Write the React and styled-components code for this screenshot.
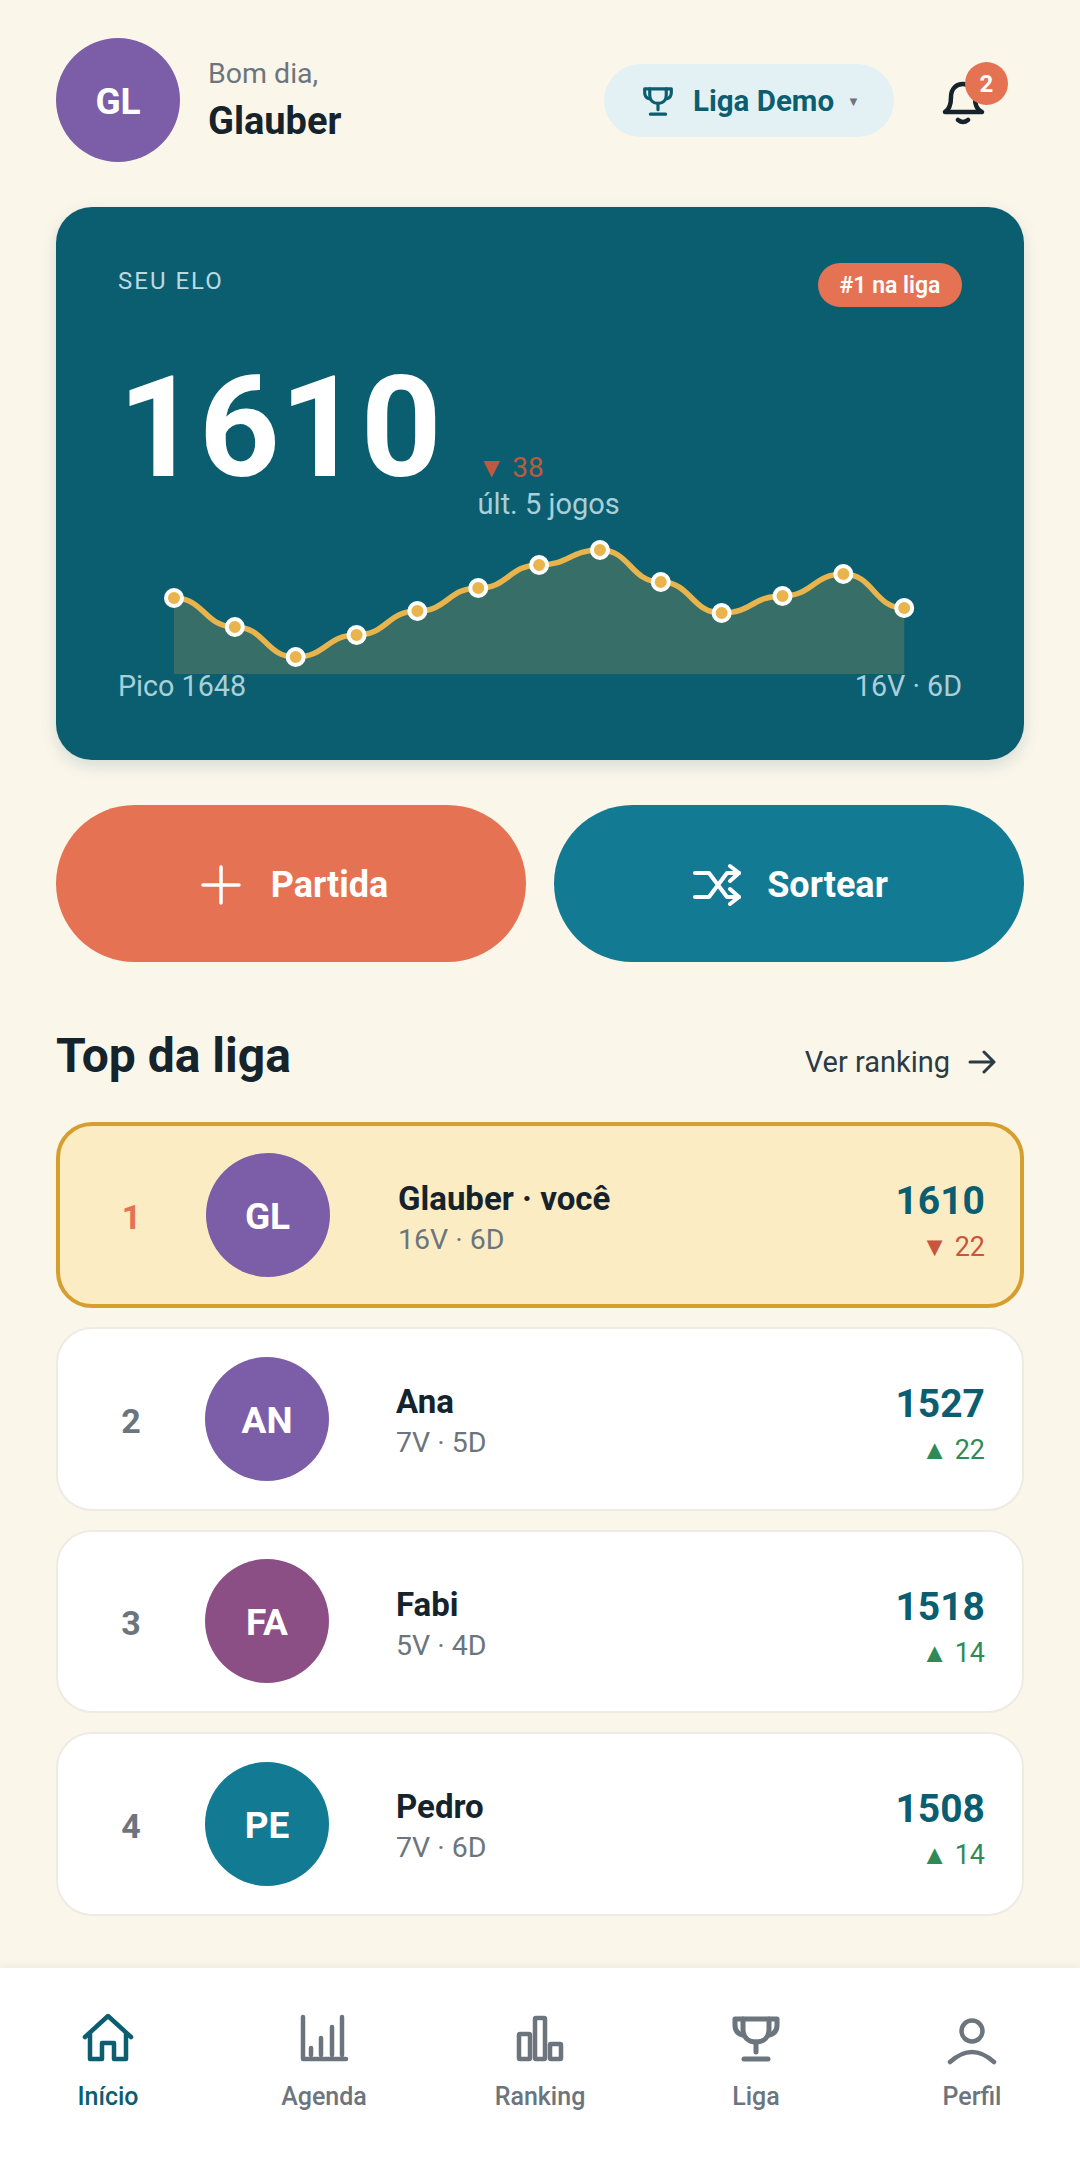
import React from "react";
import styled, { createGlobalStyle } from "styled-components";

const TEAL_DARK = "#0b5e70";
const TEAL = "#127b93";
const CORAL = "#e57353";
const INK = "#15232c";
const GRAY = "#6c757d";
const GOLD = "#e9b44c";
const PALE = "#a9cfd9";

const GlobalStyle = createGlobalStyle`
  html, body {
    margin: 0;
    padding: 0;
    background: #fbf6ea;
    font-family: Roboto, "Liberation Sans", sans-serif;
    color: ${INK};
  }
  * { box-sizing: border-box; }
`;

const Page = styled.div`
  width: 1080px;
  min-height: 2160px;
  display: flex;
  flex-direction: column;
`;

const Content = styled.main`
  flex: 1;
  padding: 38px 56px 0;
`;

const Header = styled.header`
  display: flex;
  align-items: center;
  height: 124px;
`;

const Avatar = styled.div`
  width: 124px;
  height: 124px;
  border-radius: 50%;
  flex: none;
  display: flex;
  align-items: center;
  justify-content: center;
  background: ${(p) => p.$color};
  color: #fff;
  font-size: 37px;
  font-weight: 700;
  padding-top: 3px;
`;

const Greeting = styled.div`
  margin-left: 28px;
  flex: 1;
  display: flex;
  flex-direction: column;
  gap: 9px;
  padding-top: 1px;
`;

const Hello = styled.span`
  font-size: 28.5px;
  line-height: 33px;
  color: ${GRAY};
`;

const UserName = styled.span`
  font-size: 38px;
  line-height: 45px;
  font-weight: 700;
`;

const LeaguePill = styled.button`
  width: 290px;
  height: 73px;
  border: 0;
  border-radius: 37px;
  background: #e4f1f4;
  color: ${TEAL_DARK};
  font-family: inherit;
  font-size: 29.5px;
  font-weight: 700;
  display: flex;
  align-items: center;
  padding: 2px 0 0 36px;
`;

const PillText = styled.span`
  margin-left: 17px;
`;

const Caret = styled.span`
  margin-left: 13px;
  font-size: 13px;
  color: ${GRAY};
`;

const BellButton = styled.div`
  position: relative;
  width: 44px;
  height: 44px;
  margin-left: 48px;
  margin-right: 38px;
  margin-top: 6px;
`;

const BellBadge = styled.span`
  position: absolute;
  top: -19px;
  left: 23px;
  width: 43px;
  height: 43px;
  border-radius: 50%;
  background: ${CORAL};
  color: #fff;
  font-size: 24px;
  font-weight: 700;
  display: flex;
  align-items: center;
  justify-content: center;
`;

const Hero = styled.section`
  margin-top: 45px;
  height: 553px;
  border-radius: 36px;
  background: ${TEAL_DARK};
  box-shadow: 0 6px 16px rgba(11, 94, 112, 0.16);
  padding: 56px 62px;
  color: #fff;
`;

const HeroTop = styled.div`
  display: flex;
  justify-content: space-between;
  align-items: flex-start;
`;

const EloLabel = styled.span`
  font-size: 24px;
  line-height: 36px;
  letter-spacing: 2px;
  color: #bcd9e0;
`;

const RankBadge = styled.span`
  height: 44px;
  width: 144px;
  border-radius: 22px;
  background: ${CORAL};
  font-size: 23px;
  font-weight: 600;
  display: flex;
  align-items: center;
  justify-content: center;
`;

const EloRow = styled.div`
  margin-top: 49px;
  display: flex;
  align-items: flex-end;
  gap: 36px;
`;

const EloValue = styled.div`
  font-size: 141px;
  line-height: 144px;
  font-weight: 700;
  margin-bottom: 22px;
`;

const EloTrend = styled.div`
  display: flex;
  flex-direction: column;
  font-size: 29px;
  line-height: 36px;
  color: ${PALE};
`;

const TrendDown = styled.span`
  color: #c0583f;
  font-size: 28px;
`;

const Chart = styled.svg`
  display: block;
  margin-top: 16px;
  overflow: visible;
`;

const HeroFoot = styled.div`
  display: flex;
  justify-content: space-between;
  font-size: 28.7px;
  line-height: 24px;
  color: ${PALE};
`;

const Actions = styled.div`
  margin-top: 45px;
  display: grid;
  grid-template-columns: 1fr 1fr;
  gap: 28px;
`;

const ActionButton = styled.button`
  height: 157px;
  border: 0;
  border-radius: 79px;
  background: ${(p) => p.$color};
  color: #fff;
  font-family: inherit;
  font-size: 36px;
  font-weight: 700;
  display: flex;
  align-items: center;
  justify-content: center;
  gap: 26px;
  padding: 2px 0 0 3px;
`;

const SectionHead = styled.div`
  margin-top: 61px;
  height: 66px;
  display: flex;
  align-items: center;
  justify-content: space-between;
  padding-right: 28px;
`;

const SectionTitle = styled.h2`
  margin: 0;
  font-size: 48px;
  font-weight: 700;
  line-height: 66px;
`;

const RankingLink = styled.a`
  display: flex;
  align-items: center;
  gap: 18px;
  margin-top: 11px;
  font-size: 29px;
  color: #2b3a44;
`;

const Rows = styled.div`
  margin-top: 33px;
  display: flex;
  flex-direction: column;
  gap: 19px;
`;

const Row = styled.div`
  display: flex;
  align-items: center;
  border-radius: 36px;
  background: ${(p) => (p.$me ? "#fbecc4" : "#fff")};
  border: ${(p) => (p.$me ? "4px solid #d69e2e" : "2px solid #eeebe5")};
  padding: ${(p) => (p.$me ? "27px 35px 27px 38.5px" : "27.75px 37px 27.75px 40px")};
`;

const RankNum = styled.span`
  width: 66px;
  margin-right: 41px;
  text-align: center;
  font-size: 34px;
  font-weight: 700;
  padding-top: 4px;
  color: ${(p) => (p.$me ? CORAL : GRAY)};
`;

const PlayerInfo = styled.div`
  flex: 1;
  margin-left: ${(p) => (p.$me ? "68.5px" : "67px")};
  display: flex;
  flex-direction: column;
  gap: 4px;
  padding-top: 4px;
`;

const PlayerName = styled.span`
  font-size: 33px;
  line-height: 40px;
  font-weight: 700;
`;

const PlayerRecord = styled.span`
  font-size: 28.5px;
  line-height: 33px;
  color: ${GRAY};
`;

const Score = styled.div`
  display: flex;
  flex-direction: column;
  align-items: flex-end;
  gap: 7px;
  padding-top: 10px;
`;

const ScoreValue = styled.span`
  font-size: 39px;
  line-height: 46px;
  font-weight: 700;
  color: ${TEAL_DARK};
`;

const ScoreDelta = styled.span`
  font-size: 27px;
  line-height: 32px;
  color: ${(p) => (p.$up ? "#2e8b57" : "#c8553d")};
`;

const Nav = styled.nav`
  height: 192px;
  background: #fff;
  box-shadow: 0 -2px 8px rgba(21, 35, 44, 0.06);
  display: grid;
  grid-template-columns: repeat(5, 1fr);
  padding-top: 45px;
`;

const NavItem = styled.div`
  display: flex;
  flex-direction: column;
  align-items: center;
  gap: 17px;
  font-size: 25px;
  line-height: 30px;
  font-weight: 500;
  color: ${(p) => (p.$active ? TEAL_DARK : GRAY)};
`;

const Glyph = styled.svg`
  display: block;
  fill: none;
  stroke: currentColor;
  stroke-width: ${(p) => p.$stroke || 4.5};
  stroke-linecap: round;
  stroke-linejoin: round;
`;

const NavGlyph = ({ children, stroke }) => (
  <Glyph width="56" height="52" viewBox="0 0 56 52" $stroke={stroke}>
    {children}
  </Glyph>
);

const TrophyPaths = () => (
  <>
    <path d="M7 6H49V12C49 18 46 21 41 22M7 6V12C7 18 10 21 15 22" />
    <path d="M15 6V16C15 24 20 29 28 29C36 29 41 24 41 16V6" />
    <path d="M28 29V39M16 46H40" />
  </>
);

const HomeIcon = () => (
  <NavGlyph>
    <path d="M5 24L28 3L51 24" />
    <path d="M10 21V46H22V30H34V46H46V21" />
  </NavGlyph>
);

const AgendaIcon = () => (
  <NavGlyph>
    <path d="M7 4V46H50" />
    <path d="M15 35V42M25 25V42M36 14V42M46 4V42" />
  </NavGlyph>
);

const RankingIcon = () => (
  <NavGlyph>
    <rect x="7" y="21" width="11" height="25" rx="1" />
    <rect x="23" y="5" width="10" height="41" rx="1" />
    <rect x="38" y="31" width="11" height="15" rx="1" />
  </NavGlyph>
);

const TrophyIcon = () => (
  <NavGlyph stroke={5}>
    <TrophyPaths />
  </NavGlyph>
);

const PersonIcon = () => (
  <NavGlyph>
    <circle cx="28" cy="18" r="10.5" />
    <path d="M6 49Q28 29 50 49" />
  </NavGlyph>
);

const navItems = [
  { label: "Início", icon: <HomeIcon />, active: true },
  { label: "Agenda", icon: <AgendaIcon /> },
  { label: "Ranking", icon: <RankingIcon /> },
  { label: "Liga", icon: <TrophyIcon /> },
  { label: "Perfil", icon: <PersonIcon /> },
];

const players = [
  { rank: 1, initials: "GL", color: "#7b5ea7", name: "Glauber · você", record: "16V · 6D", elo: 1610, delta: "▼ 22", me: true },
  { rank: 2, initials: "AN", color: "#7b5ea7", name: "Ana", record: "7V · 5D", elo: 1527, delta: "▲ 22", up: true },
  { rank: 3, initials: "FA", color: "#8b4f85", name: "Fabi", record: "5V · 4D", elo: 1518, delta: "▲ 14", up: true },
  { rank: 4, initials: "PE", color: TEAL, name: "Pedro", record: "7V · 6D", elo: 1508, delta: "▲ 14", up: true },
];

// sparkline of the last games, y in chart pixels
const history = [60, 89, 119, 97, 73, 50, 27, 12, 44, 75, 58, 36, 70];
const CHART_W = 844;
const CHART_H = 136;
const CHART_X0 = 56;
const CHART_STEP = 60.85;

const chartPoints = history.map((y, i) => [CHART_X0 + i * CHART_STEP, y]);

const linePath = chartPoints.reduce((d, [x, y], i) => {
  if (i === 0) return `M${x} ${y}`;
  const [px, py] = chartPoints[i - 1];
  const mid = (px + x) / 2;
  return `${d}C${mid} ${py} ${mid} ${y} ${x} ${y}`;
}, "");

const lastX = chartPoints[chartPoints.length - 1][0];
const areaPath = `${linePath}L${lastX} ${CHART_H}L${CHART_X0} ${CHART_H}Z`;

const EloChart = () => (
  <Chart width={CHART_W} height={CHART_H} viewBox={`0 0 ${CHART_W} ${CHART_H}`}>
    <path d={areaPath} fill={GOLD} fillOpacity="0.2" />
    <path d={linePath} fill="none" stroke={GOLD} strokeWidth="5.5" />
    {chartPoints.map(([x, y]) => (
      <circle key={x} cx={x} cy={y} r="8" fill={GOLD} stroke="#fff" strokeWidth="4" />
    ))}
  </Chart>
);

export default function App() {
  return (
    <Page>
      <GlobalStyle />
      <Content>
        <Header>
          <Avatar $color="#7b5ea7">GL</Avatar>
          <Greeting>
            <Hello>Bom dia,</Hello>
            <UserName>Glauber</UserName>
          </Greeting>
          <LeaguePill>
            <Glyph width="36" height="33" viewBox="0 0 56 52" $stroke={5}>
              <TrophyPaths />
            </Glyph>
            <PillText>Liga Demo</PillText>
            <Caret>▼</Caret>
          </LeaguePill>
          <BellButton>
            <Glyph width="44" height="44" viewBox="0 0 44 44" $stroke={4.5}>
              <path d="M3 31C8 28 9 23 9 16C9 8 14 3 21 3C28 3 33 8 33 16C33 23 34 28 40 31Z" />
              <path d="M16 39Q21 43 26 39" />
            </Glyph>
            <BellBadge>2</BellBadge>
          </BellButton>
        </Header>

        <Hero>
          <HeroTop>
            <EloLabel>SEU ELO</EloLabel>
            <RankBadge>#1 na liga</RankBadge>
          </HeroTop>
          <EloRow>
            <EloValue>1610</EloValue>
            <EloTrend>
              <TrendDown>▼ 38</TrendDown>
              <span>últ. 5 jogos</span>
            </EloTrend>
          </EloRow>
          <EloChart />
          <HeroFoot>
            <span>Pico 1648</span>
            <span>16V · 6D</span>
          </HeroFoot>
        </Hero>

        <Actions>
          <ActionButton $color={CORAL}>
            <Glyph width="48" height="48" viewBox="0 0 48 48" $stroke={3.5}>
              <path d="M24 6V42M6 24H42" />
            </Glyph>
            Partida
          </ActionButton>
          <ActionButton $color={TEAL}>
            <Glyph width="48" height="48" viewBox="-1 -4 48 48" $stroke={4}>
              <path d="M1 8H15L33 32H45M1 32H15L33 8H45" />
              <path d="M36 1L45 8L36 16M36 24L45 32L36 39" />
            </Glyph>
            Sortear
          </ActionButton>
        </Actions>

        <SectionHead>
          <SectionTitle>Top da liga</SectionTitle>
          <RankingLink>
            Ver ranking
            <Glyph width="28" height="24" viewBox="0 0 28 24" $stroke={3}>
              <path d="M2 12H26M16 2L26 12L16 22" />
            </Glyph>
          </RankingLink>
        </SectionHead>

        <Rows>
          {players.map((p) => (
            <Row key={p.rank} $me={p.me}>
              <RankNum $me={p.me}>{p.rank}</RankNum>
              <Avatar $color={p.color}>{p.initials}</Avatar>
              <PlayerInfo $me={p.me}>
                <PlayerName>{p.name}</PlayerName>
                <PlayerRecord>{p.record}</PlayerRecord>
              </PlayerInfo>
              <Score>
                <ScoreValue>{p.elo}</ScoreValue>
                <ScoreDelta $up={p.up}>{p.delta}</ScoreDelta>
              </Score>
            </Row>
          ))}
        </Rows>
      </Content>

      <Nav>
        {navItems.map((item) => (
          <NavItem key={item.label} $active={item.active}>
            {item.icon}
            {item.label}
          </NavItem>
        ))}
      </Nav>
    </Page>
  );
}
